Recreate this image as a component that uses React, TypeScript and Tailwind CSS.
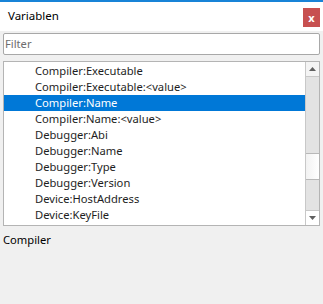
import React from "react";

const items = [
  "Compiler:Executable",
  "Compiler:Executable:<value>",
  "Compiler:Name",
  "Compiler:Name:<value>",
  "Debugger:Abi",
  "Debugger:Name",
  "Debugger:Type",
  "Debugger:Version",
  "Device:HostAddress",
  "Device:KeyFile",
];

const selected = 2;

const Arrow = ({ up }: { up?: boolean }) => (
  <svg width="7" height="4" viewBox="0 0 7 4">
    <path d={up ? "M0 4 L3.5 0 L7 4 Z" : "M0 0 L3.5 4 L7 0 Z"} fill="#606060" />
  </svg>
);

const App = () => {
  return (
    <div
      className="w-[323px] h-[304px] bg-[#f0f0f0] flex flex-col text-[11.2px] text-[#1e1e1e] overflow-hidden"
      style={{ fontFamily: '"Noto Sans", "Open Sans", sans-serif' }}
    >
      <div className="h-[2px] bg-[#1883d7]" />
      <div className="h-[29px] bg-white flex justify-between pl-[8px] pr-[3px]">
        <span className="self-center text-[11.5px] text-black leading-none -mt-[1px]">Variablen</span>
        <div className="mt-[6px] w-[17px] h-[19px] bg-[#c75050] flex items-center justify-center text-white text-[11px] font-bold leading-none">
          x
        </div>
      </div>
      <div className="px-[3px] pt-[2px]">
        <div className="h-[22px] bg-white border border-[#a8a8a8] rounded-[2px] flex items-center px-[1px] text-[#6d6d6d]">
          Filter
        </div>
      </div>
      <div className="mx-[3px] mt-[6px] h-[165px] bg-white border border-[#b4b4b4] flex">
        <div className="flex-1 pt-[1px]">
          {items.map((item, idx) => (
            <div
              key={idx}
              className={`h-[16px] pl-[31px] flex items-center leading-none ${
                idx === selected ? "bg-[#0078d7] text-white" : ""
              }`}
            >
              {item}
            </div>
          ))}
        </div>
        <div className="w-[14px] border-l border-[#c8c8c8] flex flex-col bg-[#e3e3e3]">
          <div className="h-[15px] bg-[#f4f4f4] border-b border-[#c8c8c8] flex items-center justify-center">
            <Arrow up />
          </div>
          <div className="h-[76px]" />
          <div className="h-[27px] bg-gradient-to-r from-[#f2f2f2] to-white border-y border-[#b8b8b8]" />
          <div className="flex-1" />
          <div className="h-[15px] bg-white border-t border-[#c8c8c8] flex items-center justify-center">
            <Arrow />
          </div>
        </div>
      </div>
      <div className="px-[3px] pt-[6px] text-black">Compiler</div>
    </div>
  );
};

export default App;
